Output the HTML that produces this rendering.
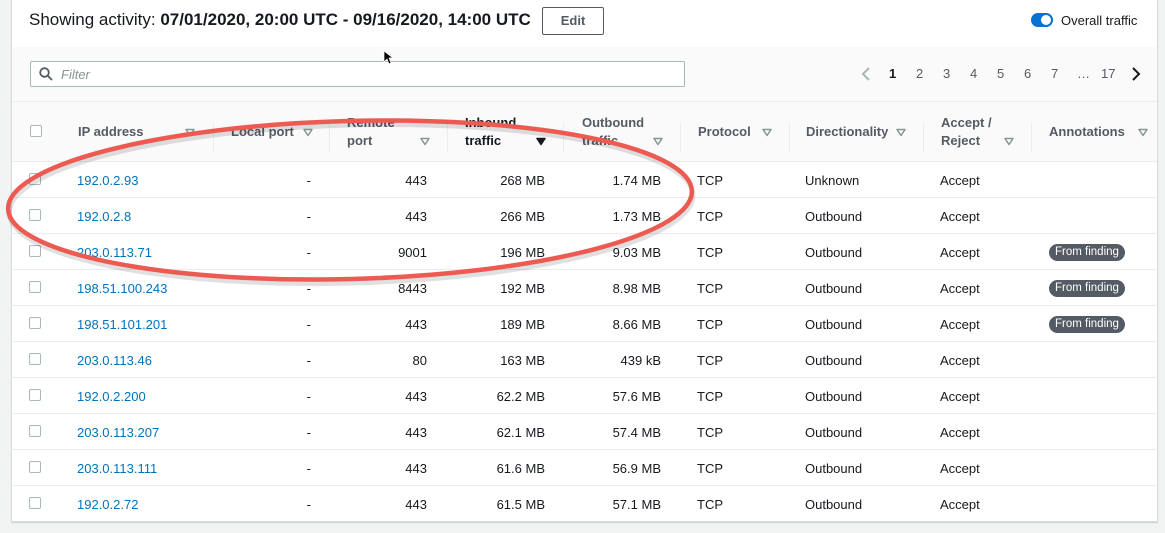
<!DOCTYPE html>
<html><head><meta charset="utf-8"><style>
*{box-sizing:border-box;margin:0;padding:0}
body{width:1165px;height:533px;background:#f2f3f3;font-family:"Liberation Sans",sans-serif;font-size:13px;color:#16191f;position:relative;overflow:hidden}
.panel{position:absolute;left:11px;top:0;width:1147px;height:522px;background:#fff;border:1px solid #dadcdc;border-top:none;box-shadow:0 1px 1px rgba(0,0,0,.15)}
.top{position:absolute;left:0;top:0;width:100%;height:47px}
.title{position:absolute;left:17px;top:10px;font-size:17px}
.title b{font-weight:bold}
.edit{position:absolute;left:530px;top:7px;width:62px;height:28px;border:1px solid #545b64;border-radius:2px;font-size:13px;font-weight:bold;color:#545b64;text-align:center;line-height:26px}
.tog{position:absolute;left:1019px;top:13px;width:22px;height:14px;border-radius:7px;background:#0972d3}
.tog:after{content:"";position:absolute;right:2px;top:2px;width:10px;height:10px;border-radius:50%;background:#fff}
.ot{position:absolute;left:1049px;top:13px;font-size:13px}
.band{position:absolute;left:0;top:47px;width:100%;height:115px;background:#fafafa;border-bottom:1px solid #eaeded}
.filter{position:absolute;left:18px;top:14px;width:655px;height:26px;border:1px solid #aab7b8;border-radius:2px;background:#fff}
.filter span{position:absolute;left:30px;top:5px;font-style:italic;color:#879596;font-size:13px}
.pag{position:absolute;top:19px;font-size:13px;color:#545b64}
.hline{position:absolute;left:0;top:54px;width:100%;height:1px;background:#eaeded}
.th{position:absolute;font-weight:bold;color:#545b64;font-size:13px;line-height:18px}
.sep{position:absolute;top:76px;width:1px;height:30px;background:#eaeded}
.tri{position:absolute;width:10px;height:9px}
.row{position:absolute;left:0;width:100%;height:36px;border-bottom:1px solid #eaeded}
.c{position:absolute;top:11px;font-size:13px}
.r{text-align:right}
.cb{position:absolute;left:18px;top:11px;width:12px;height:12px;border:1px solid #aab7b8;border-radius:2px;background:#fff}
.ip{color:#0073bb}
.badge{position:absolute;left:1038px;top:10px;background:#545b64;color:#fff;font-size:11.5px;border-radius:9px;padding:2px 6px;line-height:13px}
</style></head><body>
<svg width="0" height="0" style="position:absolute"><defs>
<symbol id="t" viewBox="0 0 10 9"><path d="M1 1.5H9L5 7.5Z" fill="none" stroke="#879596" stroke-width="1.5" stroke-linejoin="round"/></symbol>
<symbol id="tf" viewBox="0 0 10 9"><path d="M1 1.5H9L5 7.5Z" fill="#16191f" stroke="#16191f" stroke-width="1.5" stroke-linejoin="round"/></symbol>
</defs></svg>
<div class="panel">
 <div class="top">
  <div class="title">Showing activity: <b>07/01/2020, 20:00 UTC - 09/16/2020, 14:00 UTC</b></div>
  <div class="edit">Edit</div>
  <div class="tog"></div><div class="ot">Overall traffic</div>
 </div>
 <div class="band">
  <div class="filter"><svg style="position:absolute;left:8px;top:5px" width="14" height="14" viewBox="0 0 14 14"><circle cx="5.5" cy="5.5" r="4.3" fill="none" stroke="#545b64" stroke-width="1.8"/><path d="M8.7 8.7L13 13" stroke="#545b64" stroke-width="1.8"/></svg><span>Filter</span></div>
  <svg style="position:absolute;left:849px;top:20px" width="10" height="14"><path d="M8 1L2 7L8 13" fill="none" stroke="#aab7b8" stroke-width="2"/></svg>
  <div class="pag" style="left:877px;font-weight:bold;color:#16191f">1</div>
  <div class="pag" style="left:904px">2</div>
  <div class="pag" style="left:931px">3</div>
  <div class="pag" style="left:958px">4</div>
  <div class="pag" style="left:985px">5</div>
  <div class="pag" style="left:1012px">6</div>
  <div class="pag" style="left:1039px">7</div>
  <div class="pag" style="left:1065px">…</div>
  <div class="pag" style="left:1089px">17</div>
  <svg style="position:absolute;left:1119px;top:20px" width="10" height="14"><path d="M2 1L8 7L2 13" fill="none" stroke="#16191f" stroke-width="2"/></svg>
  <div class="hline"></div>
  <div class="cb" style="top:78px"></div>
  <div class="th" style="left:66px;top:76px">IP address</div><svg class="tri" style="left:173px;top:81px"><use href="#t"/></svg>
  <div class="sep" style="left:201px"></div>
  <div class="th" style="left:219px;top:76px">Local port</div><svg class="tri" style="left:291px;top:81px"><use href="#t"/></svg>
  <div class="sep" style="left:317px"></div>
  <div class="th" style="left:335px;top:67px">Remote<br>port</div><svg class="tri" style="left:408px;top:90px"><use href="#t"/></svg>
  <div class="sep" style="left:435px"></div>
  <div class="th" style="left:453px;top:67px;color:#16191f">Inbound<br>traffic</div><svg class="tri" style="left:524px;top:90px"><use href="#tf"/></svg>
  <div class="sep" style="left:551px"></div>
  <div class="th" style="left:570px;top:67px">Outbound<br>traffic</div><svg class="tri" style="left:641px;top:90px"><use href="#t"/></svg>
  <div class="sep" style="left:668px"></div>
  <div class="th" style="left:686px;top:76px">Protocol</div><svg class="tri" style="left:750px;top:81px"><use href="#t"/></svg>
  <div class="sep" style="left:777px"></div>
  <div class="th" style="left:794px;top:76px">Directionality</div><svg class="tri" style="left:884px;top:81px"><use href="#t"/></svg>
  <div class="sep" style="left:911px"></div>
  <div class="th" style="left:929px;top:67px">Accept /<br>Reject</div><svg class="tri" style="left:992px;top:90px"><use href="#t"/></svg>
  <div class="sep" style="left:1019px"></div>
  <div class="th" style="left:1037px;top:76px">Annotations</div><svg class="tri" style="left:1126px;top:81px"><use href="#t"/></svg>
 </div>
</div>
<div style="position:absolute;left:11px;top:162px;width:1147px">
<div class="row" style="top:0"><div class="cb"></div><div class="c ip" style="left:66px">192.0.2.93</div><div class="c r" style="left:250px;width:50px">-</div><div class="c r" style="left:366px;width:50px">443</div><div class="c r" style="left:454px;width:80px">268 MB</div><div class="c r" style="left:570px;width:80px">1.74 MB</div><div class="c" style="left:686px">TCP</div><div class="c" style="left:794px">Unknown</div><div class="c" style="left:929px">Accept</div></div>
<div class="row" style="top:36px"><div class="cb"></div><div class="c ip" style="left:66px">192.0.2.8</div><div class="c r" style="left:250px;width:50px">-</div><div class="c r" style="left:366px;width:50px">443</div><div class="c r" style="left:454px;width:80px">266 MB</div><div class="c r" style="left:570px;width:80px">1.73 MB</div><div class="c" style="left:686px">TCP</div><div class="c" style="left:794px">Outbound</div><div class="c" style="left:929px">Accept</div></div>
<div class="row" style="top:72px"><div class="cb"></div><div class="c ip" style="left:66px">203.0.113.71</div><div class="c r" style="left:250px;width:50px">-</div><div class="c r" style="left:366px;width:50px">9001</div><div class="c r" style="left:454px;width:80px">196 MB</div><div class="c r" style="left:570px;width:80px">9.03 MB</div><div class="c" style="left:686px">TCP</div><div class="c" style="left:794px">Outbound</div><div class="c" style="left:929px">Accept</div><div class="badge">From finding</div></div>
<div class="row" style="top:108px"><div class="cb"></div><div class="c ip" style="left:66px">198.51.100.243</div><div class="c r" style="left:250px;width:50px">-</div><div class="c r" style="left:366px;width:50px">8443</div><div class="c r" style="left:454px;width:80px">192 MB</div><div class="c r" style="left:570px;width:80px">8.98 MB</div><div class="c" style="left:686px">TCP</div><div class="c" style="left:794px">Outbound</div><div class="c" style="left:929px">Accept</div><div class="badge">From finding</div></div>
<div class="row" style="top:144px"><div class="cb"></div><div class="c ip" style="left:66px">198.51.101.201</div><div class="c r" style="left:250px;width:50px">-</div><div class="c r" style="left:366px;width:50px">443</div><div class="c r" style="left:454px;width:80px">189 MB</div><div class="c r" style="left:570px;width:80px">8.66 MB</div><div class="c" style="left:686px">TCP</div><div class="c" style="left:794px">Outbound</div><div class="c" style="left:929px">Accept</div><div class="badge">From finding</div></div>
<div class="row" style="top:180px"><div class="cb"></div><div class="c ip" style="left:66px">203.0.113.46</div><div class="c r" style="left:250px;width:50px">-</div><div class="c r" style="left:366px;width:50px">80</div><div class="c r" style="left:454px;width:80px">163 MB</div><div class="c r" style="left:570px;width:80px">439 kB</div><div class="c" style="left:686px">TCP</div><div class="c" style="left:794px">Outbound</div><div class="c" style="left:929px">Accept</div></div>
<div class="row" style="top:216px"><div class="cb"></div><div class="c ip" style="left:66px">192.0.2.200</div><div class="c r" style="left:250px;width:50px">-</div><div class="c r" style="left:366px;width:50px">443</div><div class="c r" style="left:454px;width:80px">62.2 MB</div><div class="c r" style="left:570px;width:80px">57.6 MB</div><div class="c" style="left:686px">TCP</div><div class="c" style="left:794px">Outbound</div><div class="c" style="left:929px">Accept</div></div>
<div class="row" style="top:252px"><div class="cb"></div><div class="c ip" style="left:66px">203.0.113.207</div><div class="c r" style="left:250px;width:50px">-</div><div class="c r" style="left:366px;width:50px">443</div><div class="c r" style="left:454px;width:80px">62.1 MB</div><div class="c r" style="left:570px;width:80px">57.4 MB</div><div class="c" style="left:686px">TCP</div><div class="c" style="left:794px">Outbound</div><div class="c" style="left:929px">Accept</div></div>
<div class="row" style="top:288px"><div class="cb"></div><div class="c ip" style="left:66px">203.0.113.111</div><div class="c r" style="left:250px;width:50px">-</div><div class="c r" style="left:366px;width:50px">443</div><div class="c r" style="left:454px;width:80px">61.6 MB</div><div class="c r" style="left:570px;width:80px">56.9 MB</div><div class="c" style="left:686px">TCP</div><div class="c" style="left:794px">Outbound</div><div class="c" style="left:929px">Accept</div></div>
<div class="row" style="top:324px;border-bottom:none"><div class="cb"></div><div class="c ip" style="left:66px">192.0.2.72</div><div class="c r" style="left:250px;width:50px">-</div><div class="c r" style="left:366px;width:50px">443</div><div class="c r" style="left:454px;width:80px">61.5 MB</div><div class="c r" style="left:570px;width:80px">57.1 MB</div><div class="c" style="left:686px">TCP</div><div class="c" style="left:794px">Outbound</div><div class="c" style="left:929px">Accept</div></div>
</div>
<svg style="position:absolute;left:0;top:0" width="1165" height="533">
 <ellipse cx="351" cy="202" rx="342" ry="79" fill="none" stroke="rgba(0,0,0,.12)" stroke-width="5" transform="rotate(-1.5 351 202) translate(0 2)"/>
 <ellipse cx="350" cy="200" rx="342" ry="79" fill="none" stroke="#ec5a52" stroke-width="4.5" transform="rotate(-1.5 350 200)"/>
 <path d="M384 51 L384 62 L387 59 L389 64 L391 63 L389 58 L393 58 Z" fill="#000" stroke="#fff" stroke-width=".7"/>
</svg>
</body></html>
